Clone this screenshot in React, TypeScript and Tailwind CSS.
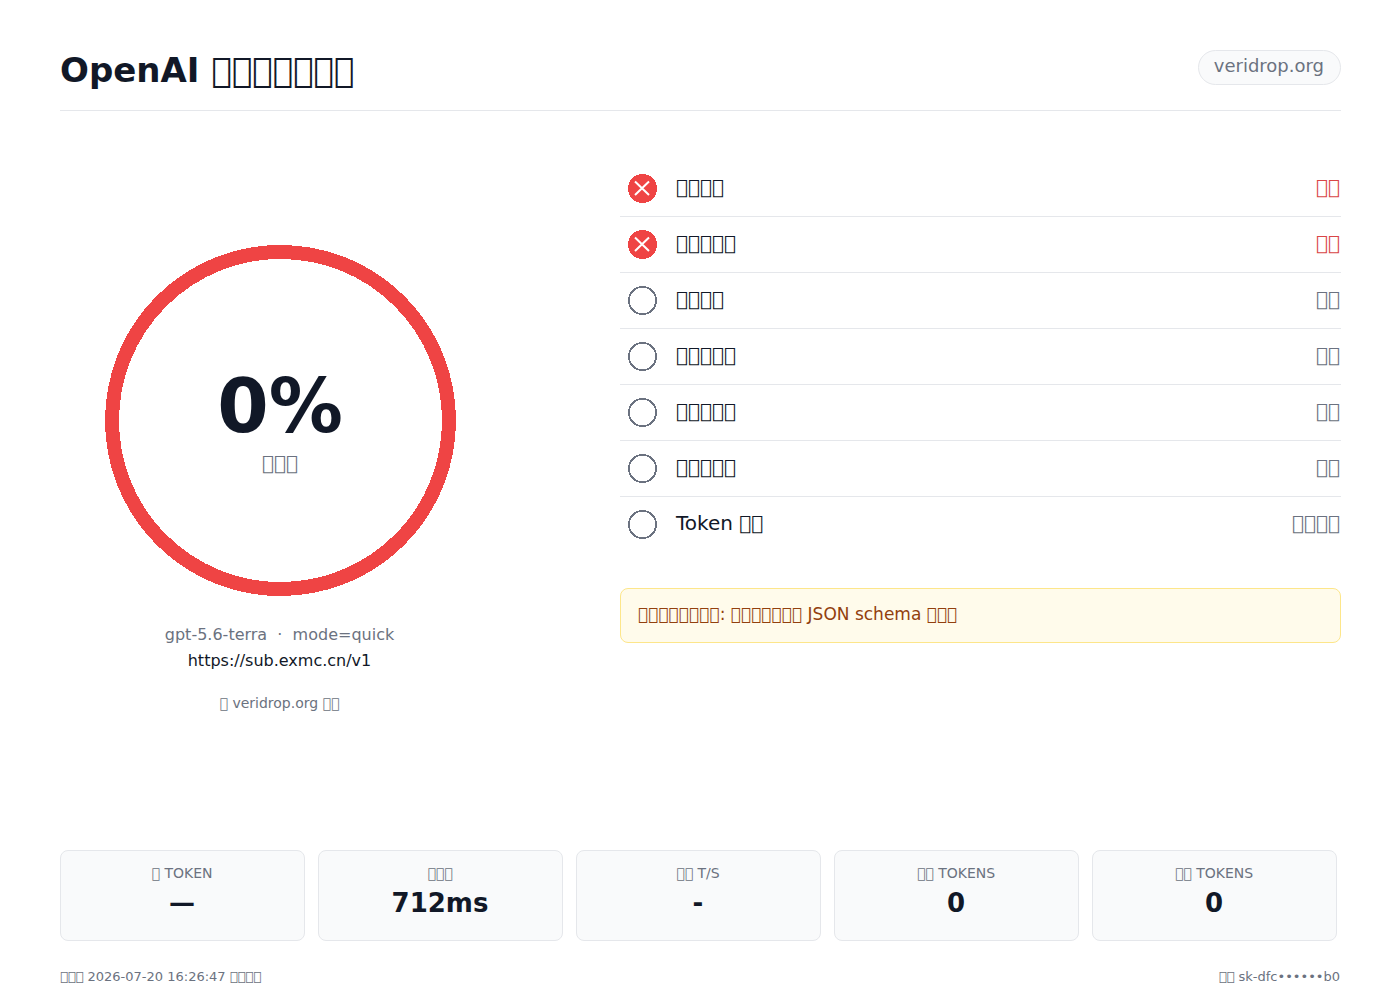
// Placeholder glyph run: the font draws its empty box for this code point.
const box = (n: number) => '\uE800'.repeat(n);

type Status = 'fail' | 'skip';

const checks: { label: string; result: string; status: Status }[] = [
  { label: box(4), result: box(2), status: 'fail' },
  { label: box(5), result: box(2), status: 'fail' },
  { label: box(4), result: box(2), status: 'skip' },
  { label: box(5), result: box(2), status: 'skip' },
  { label: box(5), result: box(2), status: 'skip' },
  { label: box(5), result: box(2), status: 'skip' },
  { label: `Token ${box(2)}`, result: box(4), status: 'skip' },
];

const stats = [
  { label: `${box(1)} TOKEN`, value: '—' },
  { label: box(3), value: '712ms' },
  { label: `${box(2)} T/S`, value: '-' },
  { label: `${box(2)} TOKENS`, value: '0' },
  { label: `${box(2)} TOKENS`, value: '0' },
];

function StatusIcon({ status }: { status: Status }) {
  if (status === 'fail') {
    return (
      <svg width="29" height="29" viewBox="0 0 29 29" className="shrink-0" aria-hidden="true">
        <circle cx="14.5" cy="14.5" r="14.5" fill="#ef4444" shapeRendering="crispEdges" />
        <path d="M7 7.5 L21 21 M21 7.5 L7 21" stroke="#fff" strokeWidth="2" fill="none" />
      </svg>
    );
  }
  return (
    <svg width="29" height="29" viewBox="0 0 29 29" className="shrink-0" aria-hidden="true">
      <circle cx="14.5" cy="14.5" r="13.6" fill="none" stroke="#6b7280" strokeWidth="1.8" shapeRendering="crispEdges" />
    </svg>
  );
}

function ScoreRing() {
  return (
    <div className="relative flex h-[351px] w-[351px] flex-col items-center justify-center">
      <svg viewBox="0 0 351 351" className="absolute inset-0 h-full w-full" aria-hidden="true">
        <circle cx="175.5" cy="175.5" r="168.5" fill="none" stroke="#ef4444" strokeWidth="14" shapeRendering="crispEdges" />
      </svg>
      <p className="pr-px text-[74px] leading-[82px] font-bold">0%</p>
      <p className="pt-[2px] pr-px text-[20px] leading-7 text-[#6b7280]">{box(3)}</p>
    </div>
  );
}

export default function App() {
  return (
    <div className="flex min-h-screen flex-col bg-white pt-[50px] pr-[59px] pb-[13px] pl-[60px] font-['DejaVu_Sans',sans-serif] text-[#111827]">
      <header className="flex items-start justify-between border-b border-[#e5e7eb] pb-5">
        <h1 className="text-[34px] leading-10 font-bold">OpenAI {box(7)}</h1>
        <a
          href="#"
          className="rounded-full border border-[#e5e7eb] bg-[#f9fafb] pr-4 pb-1 pl-[15px] text-[18px] leading-[29px] text-[#6b7280]"
        >
          veridrop.org
        </a>
      </header>

      <main className="grid grid-cols-[441fr_721fr] gap-[119px] pt-[50px] pb-8">
        <section className="flex flex-col items-center pt-[84px]">
          <ScoreRing />
          <div className="mt-[26px] flex flex-col items-center pr-[2px] text-[16px] leading-[26px]">
            <p className="text-[#6b7280]">gpt-5.6-terra&nbsp; ·&nbsp; mode=quick</p>
            <a href="#">https://sub.exmc.cn/v1</a>
            <p className="mt-[19px] text-[14px] leading-5 text-[#6b7280]">
              {box(1)} veridrop.org {box(2)}
            </p>
          </div>
        </section>

        <section>
          <ul>
            {checks.map((c, i) => (
              <li
                key={i}
                className="flex h-14 items-center gap-[19px] border-b border-[#e5e7eb] pr-px pl-2 text-[20px] leading-7 last:border-transparent"
              >
                <StatusIcon status={c.status} />
                <span className="pb-1">{c.label}</span>
                <span className={c.status === 'fail' ? 'ml-auto pb-1 text-[#d94646]' : 'ml-auto pb-1 text-[#6b7280]'}>
                  {c.result}
                </span>
              </li>
            ))}
          </ul>
          <p className="mt-[35px] rounded-lg border border-[#fde68a] bg-[#fffbeb] px-[17px] pt-[11px] pb-[14px] text-[17px] leading-7 text-[#92400e]">
            {box(8)}: {box(7)} JSON schema {box(3)}
          </p>
        </section>
      </main>

      <section className="mt-auto grid grid-cols-5 gap-[13px] pr-1">
        {stats.map((s, i) => (
          <div
            key={i}
            className="rounded-lg border border-[#e5e7eb] bg-[#f9fafb] pt-3 pr-px pb-[17px] text-center"
          >
            <p className="text-[14px] leading-5 text-[#6b7280]">{s.label}</p>
            <p className="text-[26px] leading-10 font-bold">{s.value}</p>
          </div>
        ))}
      </section>

      <footer className="mt-[26px] flex justify-between pr-px text-[13px] leading-5 text-[#6b7280]">
        <span>
          {box(3)} 2026-07-20 16:26:47 {box(4)}
        </span>
        <span>{box(2)} sk-dfc••••••b0</span>
      </footer>
    </div>
  );
}
